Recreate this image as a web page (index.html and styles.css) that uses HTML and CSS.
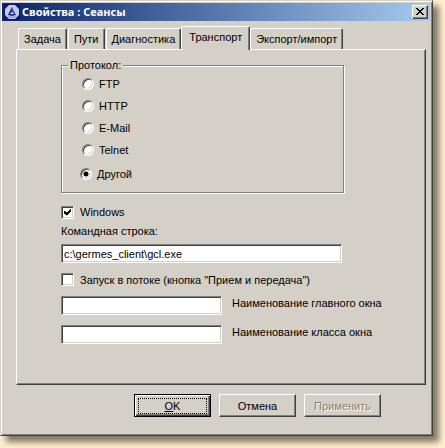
FILE: index.html
```html
<!DOCTYPE html>
<html lang="ru">
<head>
<meta charset="utf-8">
<title>Свойства : Сеансы</title>
<link rel="stylesheet" href="styles.css">
</head>
<body>
<main class="window">
  <header class="titlebar">
    <svg class="app-icon" viewBox="0 0 16 16" aria-hidden="true">
      <rect width="16" height="16" fill="#10157f"/>
      <path d="M5 1h6l4 4v6l-4 4H5l-4-4V5z" fill="#c3cadf"/>
      <path d="M8 3l4 8H4z" fill="#4456b4"/>
      <path d="M8 3v5l-4 3zM8 8l4 3-4 1-4-1z" fill="#1f2f92"/>
      <path d="M3 11l5 2 5-2-3 3H6z" fill="#8f9cc9"/>
      <path d="M8 8l2 2H6z" fill="#dfe4f2"/>
    </svg>
    <h1 class="title">Свойства : Сеансы</h1>
    <button class="close" type="button" aria-label="Закрыть">
      <svg viewBox="0 0 8 7" aria-hidden="true" shape-rendering="crispEdges"><path d="M0 0h2v1h1v1h2V1h1V0h2v1H7v1H6v1H5v1h1v1h1v1h1v1H6V6H5V5H3v1H2v1H0V6h1V5h1V4h1V3H2V2H1V1H0z"/></svg>
    </button>
  </header>

  <nav class="tabs" role="tablist">
    <button class="tab" type="button" role="tab">Задача</button>
    <button class="tab" type="button" role="tab">Пути</button>
    <button class="tab" type="button" role="tab">Диагностика</button>
    <button class="tab selected" type="button" role="tab" aria-selected="true">Транспорт</button>
    <button class="tab" type="button" role="tab">Экспорт/импорт</button>
  </nav>

  <form class="form">
    <section class="page">
      <fieldset class="group">
        <legend>Протокол:</legend>
        <label class="choice"><input class="radio" type="radio" name="protocol">FTP</label>
        <label class="choice"><input class="radio" type="radio" name="protocol">HTTP</label>
        <label class="choice"><input class="radio" type="radio" name="protocol">E-Mail</label>
        <label class="choice"><input class="radio" type="radio" name="protocol">Telnet</label>
        <label class="choice other"><input class="radio" type="radio" name="protocol" checked>Другой</label>
      </fieldset>
      <label class="option"><input class="check" type="checkbox" checked>Windows</label>
      <label class="caption" for="command">Командная строка:</label>
      <input class="text command" id="command" type="text" value="c:\germes_client\gcl.exe">
      <label class="option thread"><input class="check" type="checkbox">Запуск в потоке (кнопка "Прием и передача")</label>
      <div class="field">
        <input class="text" id="main-window" type="text">
        <label for="main-window">Наименование главного окна</label>
      </div>
      <div class="field">
        <input class="text" id="class-window" type="text">
        <label for="class-window">Наименование класса окна</label>
      </div>
    </section>
    <footer class="actions">
      <button class="button default" type="button"><span class="focus"><u>O</u>K</span></button>
      <button class="button" type="button">Отмена</button>
      <button class="button" type="button" disabled>Применить</button>
    </footer>
  </form>
</main>
</body>
</html>
```
FILE: styles.css
```css
:root {
  --face: #d4d0c8;
  --light: #ffffff;
  --shade: #808080;
  --dark: #404040;
}

* {
  box-sizing: border-box;
}

body {
  display: flex;
  min-height: 100vh;
  margin: 0;
  padding: 0 12px 12px 0;
  background: #ffefce;
  color: #000;
  font: 11px/14px "Liberation Sans", Arial, sans-serif;
}

button,
input {
  margin: 0;
  color: inherit;
  font: inherit;
}

.window {
  display: flex;
  flex: 1;
  flex-direction: column;
  min-width: 0;
  padding: 2px 2px 2px 1px;
  border: 1px solid;
  border-color: var(--face) var(--dark) var(--dark) var(--face);
  background: var(--face);
  box-shadow: inset 1px 1px var(--light), inset -1px -1px var(--shade), 6px 6px 6px rgba(0, 0, 0, 0.5);
}

.titlebar {
  display: flex;
  align-items: center;
  height: 18px;
  padding-right: 2px;
  background: linear-gradient(to right, #0a246a, #a6caf0);
}

.app-icon {
  width: 16px;
  height: 16px;
  margin-left: 2px;
}

.title {
  flex: 1;
  margin: 0 0 0 2px;
  color: #fff;
  font: bold 11px/16px "Noto Sans", sans-serif;
}

.close {
  display: flex;
  align-items: center;
  justify-content: center;
  width: 16px;
  height: 14px;
  padding: 0 1px 1px 0;
  border: 1px solid;
  border-color: var(--light) var(--dark) var(--dark) var(--light);
  background: var(--face);
  box-shadow: inset -1px -1px var(--shade);
}

.close svg {
  flex: none;
  width: 8px;
  height: 7px;
}

.tabs {
  display: flex;
  align-items: flex-end;
  height: 23px;
  margin: 5px 0 0 16px;
}

.tab {
  height: 21px;
  margin-right: 1px;
  padding: 0 5px;
  border: solid;
  border-width: 1px 1px 0;
  border-color: var(--light) var(--dark) var(--dark) var(--light);
  border-radius: 2px 2px 0 0;
  background: var(--face);
  box-shadow: inset -1px 0 var(--shade);
}

.tab.selected {
  z-index: 1;
  height: 24px;
  margin: 0 0 -1px -1px;
  padding: 0 7px 4px;
}

.form {
  display: flex;
  flex: 1;
  flex-direction: column;
}

.page {
  display: flex;
  flex: 1;
  flex-direction: column;
  align-items: flex-start;
  margin: 0 4px 0 14px;
  padding: 8px 81px 16px 44px;
  border: 1px solid;
  border-color: var(--light) var(--dark) var(--dark) var(--light);
  box-shadow: inset -1px -1px var(--shade);
}

.group {
  align-self: stretch;
  margin: 0;
  padding: 1px 20px 5px;
  border: 1px solid var(--shade);
  box-shadow: 1px 1px var(--light), inset 1px 1px var(--light);
}

.group legend {
  margin-left: -14px;
  padding: 0 2px;
  background: var(--face);
}

.choice {
  display: flex;
  align-items: center;
  gap: 5px;
  height: 22px;
}

.choice.other {
  height: 26px;
  margin-left: -2px;
}

.radio,
.check {
  flex: none;
  width: 13px;
  height: 13px;
  border: 1px solid;
  border-color: var(--shade) var(--light) var(--light) var(--shade);
  background: #fff;
  box-shadow: inset 1px 1px var(--dark), inset -1px -1px var(--face);
  appearance: none;
}

.radio {
  width: 12px;
  height: 12px;
  border-radius: 50%;
}

.radio:checked {
  background: radial-gradient(circle, #000 2px, #fff 3px);
}

.check:checked::before {
  display: block;
  width: 7px;
  height: 7px;
  margin: 2px;
  background: #000;
  clip-path: polygon(0 29%, 43% 58%, 100% 0, 100% 43%, 43% 100%, 0 71%);
  content: "";
}

.option {
  display: flex;
  align-items: center;
  gap: 6px;
  height: 14px;
  margin-top: 12px;
}

.caption {
  margin: 5px 0 6px;
}

.text {
  width: 161px;
  height: 19px;
  padding: 0 2px;
  border: 1px solid;
  border-color: var(--shade) var(--light) var(--light) var(--shade);
  background: #fff;
  box-shadow: inset 1px 1px var(--dark), inset -1px -1px var(--face);
}

.text.command {
  align-self: stretch;
  width: auto;
  margin-right: 2px;
}

.option.thread {
  height: 13px;
  margin: 10px 0 0;
}

.field {
  display: flex;
  gap: 10px;
  margin-top: 10px;
  white-space: nowrap;
}

.actions {
  display: flex;
  gap: 8px;
  justify-content: flex-end;
  padding: 9px 49px 16px 0;
}

.button {
  width: 77px;
  height: 23px;
  padding: 0;
  border: 1px solid;
  border-color: var(--light) var(--dark) var(--dark) var(--light);
  background: var(--face);
  box-shadow: inset -1px -1px var(--shade);
}

.button.default {
  padding: 2px;
  border-color: #000;
  box-shadow: inset 1px 1px var(--light), inset -1px -1px var(--dark), inset -2px -2px var(--shade);
}

.focus {
  display: block;
  margin: 0 1px;
  border: 1px dotted #000;
}

.button:disabled {
  color: var(--shade);
  text-shadow: 1px 1px var(--light);
}
```
